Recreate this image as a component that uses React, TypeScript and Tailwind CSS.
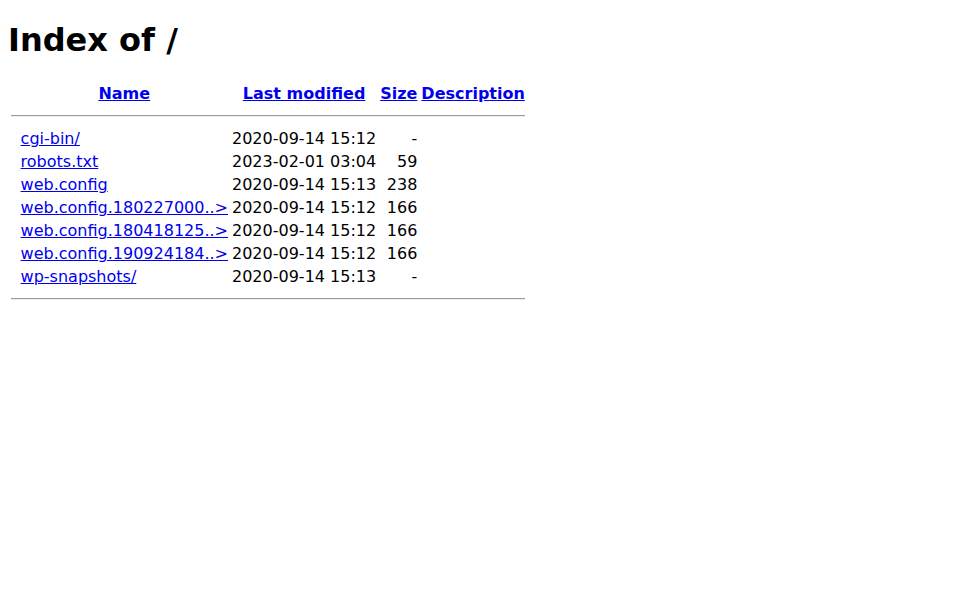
const entries = [
  { name: 'cgi-bin/', modified: '2020-09-14 15:12', size: '-' },
  { name: 'robots.txt', modified: '2023-02-01 03:04', size: '59' },
  { name: 'web.config', modified: '2020-09-14 15:13', size: '238' },
  { name: 'web.config.180227000..>', modified: '2020-09-14 15:12', size: '166' },
  { name: 'web.config.180418125..>', modified: '2020-09-14 15:12', size: '166' },
  { name: 'web.config.190924184..>', modified: '2020-09-14 15:12', size: '166' },
  { name: 'wp-snapshots/', modified: '2020-09-14 15:13', size: '-' },
];

function Rule() {
  return (
    <tr>
      <th colSpan={5} className="p-px">
        <hr className="my-2 h-0.5 border-0 border-t border-b border-solid border-t-[#9a9a9a] border-b-[#eeeeee]" />
      </th>
    </tr>
  );
}

export default function App() {
  return (
    <div className="m-2 bg-white font-['DejaVu_Sans',sans-serif] text-base leading-[normal] text-black">
      <h1 className="my-[0.67em] text-[32px] font-bold">Index of /</h1>
      <table className="border-separate border-spacing-[2px]">
        <tbody>
          <tr>
            <th className="p-px align-top">{'\u00a0'}</th>
            <th className="p-px font-bold">
              <a href="#" className="text-[#0000ee] underline">Name</a>
            </th>
            <th className="p-px font-bold">
              <a href="#" className="text-[#0000ee] underline">Last modified</a>
            </th>
            <th className="p-px font-bold">
              <a href="#" className="text-[#0000ee] underline">Size</a>
            </th>
            <th className="p-px font-bold">
              <a href="#" className="text-[#0000ee] underline">Description</a>
            </th>
          </tr>
          <Rule />
          {entries.map((e) => (
            <tr key={e.name}>
              <td className="p-px align-top">{'\u00a0'}</td>
              <td className="p-px">
                <a href="#" className="text-[#0000ee] underline">{e.name}</a>
              </td>
              <td className="p-px text-right">{e.modified}</td>
              <td className="p-px text-right">{e.size}</td>
              <td className="p-px">{'\u00a0'}</td>
            </tr>
          ))}
          <Rule />
        </tbody>
      </table>
    </div>
  );
}
